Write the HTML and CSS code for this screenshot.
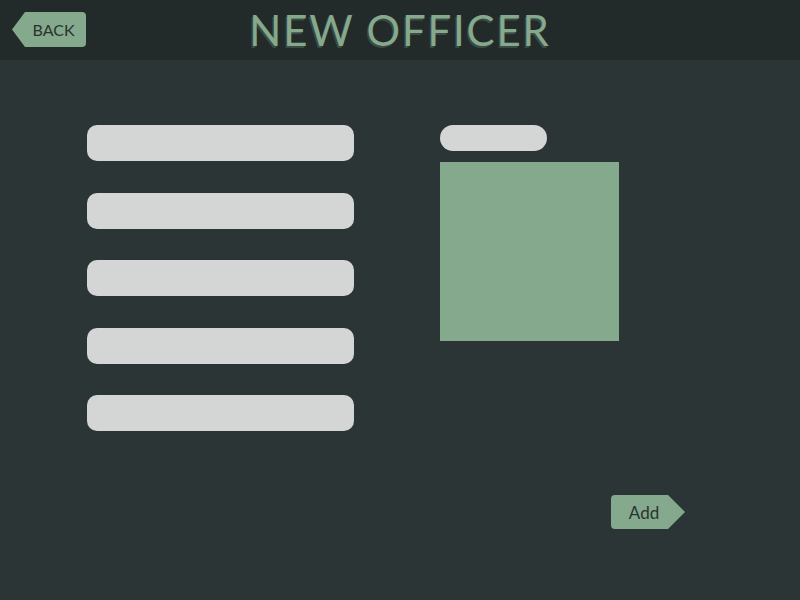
FILE: index.html
```html
<!DOCTYPE html>
<html>
<head>
<meta charset="utf-8">
<link rel="stylesheet" href="styles.css">
</head>
<body>
<header class="topbar">
  <button class="back-btn">BACK</button>
  <h1 class="title">NEW OFFICER</h1>
</header>
<main class="content">
  <div class="columns">
    <div class="fields">
      <div class="field"></div>
      <div class="field"></div>
      <div class="field"></div>
      <div class="field"></div>
      <div class="field"></div>
    </div>
    <div class="photo-col">
      <div class="photo-label"></div>
      <div class="photo"></div>
    </div>
  </div>
  <div class="actions">
    <button class="add-btn">Add</button>
  </div>
</main>
</body>
</html>
```
FILE: styles.css
```css
html, body {
  margin: 0;
  padding: 0;
  background: #2c3535;
  width: 800px;
  height: 600px;
  overflow: hidden;
  font-family: "Lato", "Liberation Sans", sans-serif;
}
.topbar {
  height: 60px;
  background: #232a2a;
  display: flex;
  align-items: center;
  justify-content: center;
  position: relative;
}
.back-btn {
  position: absolute;
  left: 12px;
  top: 12px;
  width: 74px;
  height: 35px;
  border: none;
  background: #84a98c;
  color: #2a3330;
  font-family: "Lato", "Liberation Sans", sans-serif;
  font-size: 16px;
  padding: 0 0 0 9px;
  border-radius: 0 4px 4px 0;
  clip-path: polygon(13px 0, 100% 0, 100% 100%, 13px 100%, 0 50%);
}
.title {
  margin: 0;
  color: #84a98c;
  font-size: 42px;
  font-weight: 400;
  letter-spacing: 1.8px;
  text-shadow: -1.5px 1.5px 0 #3c4a44;
  line-height: 60px;
}
.content {
  padding: 65px 0 0 87px;
}
.columns {
  display: flex;
  gap: 86px;
}
.fields {
  display: flex;
  flex-direction: column;
  gap: 31.5px;
}
.field {
  width: 267px;
  height: 36px;
  background: #d4d6d5;
  border-radius: 10px;
}
.photo-col {
  display: flex;
  flex-direction: column;
  gap: 11px;
}
.photo-label {
  width: 107px;
  height: 26px;
  background: #d4d6d5;
  border-radius: 13px;
}
.photo {
  width: 179px;
  height: 179px;
  background: #84a98c;
}
.actions {
  display: flex;
  justify-content: flex-end;
  padding-right: 115px;
  margin-top: 64px;
}
.add-btn {
  width: 74px;
  height: 34px;
  border: none;
  background: #84a98c;
  color: #2a3330;
  font-family: "Lato", "Liberation Sans", sans-serif;
  font-size: 17px;
  padding: 0 8px 0 0;
  border-radius: 4px 0 0 4px;
  clip-path: polygon(0 0, 57px 0, 100% 50%, 57px 100%, 0 100%);
}
```
